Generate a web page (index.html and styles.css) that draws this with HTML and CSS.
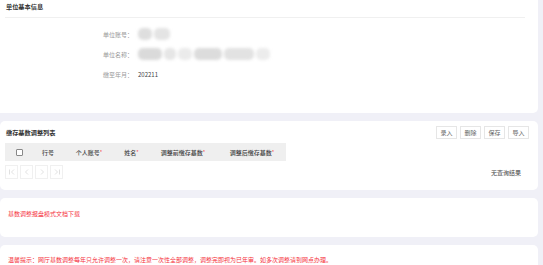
FILE: index.html
```html
<html>
  <head>
    <title>缴存基数调整</title>
    <link rel="stylesheet" href="styles.css">
  </head>
  <body>
    <main class="page">
      <section class="card info">
        <div class="card-head">
          <h2 class="card-title">单位基本信息</h2>
        </div>
        <div class="form">
          <div class="form-row">
            <span class="form-label">单位账号：</span>
            <span class="masked">
              <i></i><i></i>
            </span>
          </div>
          <div class="form-row">
            <span class="form-label">单位名称：</span>
            <span class="masked masked-long">
              <i></i><i></i><i></i><i></i><i></i><i></i>
            </span>
          </div>
          <div class="form-row">
            <span class="form-label">缴至年月：</span>
            <span class="form-value">202211</span>
          </div>
        </div>
      </section>

      <section class="card list">
        <div class="list-head">
          <h2 class="card-title">缴存基数调整列表</h2>
          <div class="actions">
            <button class="btn">录入</button>
            <button class="btn">删除</button>
            <button class="btn">保存</button>
            <button class="btn">导入</button>
          </div>
        </div>
        <div class="table-head">
          <span class="cell"><span class="check"></span></span>
          <span class="cell">行号</span>
          <span class="cell">个人账号<em>*</em></span>
          <span class="cell">姓名<em>*</em></span>
          <span class="cell">调整前缴存基数<em>*</em></span>
          <span class="cell">调整后缴存基数<em>*</em></span>
        </div>
        <div class="list-foot">
          <div class="pager">
            <span class="page-btn">
              <svg width="8" height="8" viewBox="0 0 8 8"><path d="M1.5 1.5v5M6 1.5L3.5 4 6 6.5" fill="none" stroke="#d8d8d8" stroke-width="0.8"/></svg>
            </span>
            <span class="page-btn">
              <svg width="8" height="8" viewBox="0 0 8 8"><path d="M5 1.5L2.5 4 5 6.5" fill="none" stroke="#d8d8d8" stroke-width="0.8"/></svg>
            </span>
            <span class="page-btn">
              <svg width="8" height="8" viewBox="0 0 8 8"><path d="M3 1.5L5.5 4 3 6.5" fill="none" stroke="#d8d8d8" stroke-width="0.8"/></svg>
            </span>
            <span class="page-btn">
              <svg width="8" height="8" viewBox="0 0 8 8"><path d="M2 1.5L4.5 4 2 6.5M6.5 1.5v5" fill="none" stroke="#d8d8d8" stroke-width="0.8"/></svg>
            </span>
          </div>
          <span class="empty">无查询结果</span>
        </div>
      </section>

      <section class="card download">
        <a class="red-text">基数调整报盘模式文档下载</a>
      </section>

      <section class="card tip">
        <p class="red-text">温馨提示：网厅基数调整每年只允许调整一次，请注意一次性全部调整，调整完即视为已年审。如多次调整请到网点办理。</p>
      </section>
    </main>
  </body>
</html>
```

FILE: styles.css
```css
:root {
  --fonts: "Noto Sans CJK SC", "Noto Sans", sans-serif;
  --background: #f0f0f7;
  --card-background: #ffffff;
  --card-radius: 5px;
  --title-text: #333333;
  --label-text: #9a9a9a;
  --red: #f5313d;
  --line: #f0f0f0;
}

body,
html {
  font-family: var(--fonts);
  margin: 0;
  padding: 0;
}

body {
  background: var(--background);
  color: var(--title-text);
  font-size: 6px;
  overflow: hidden;
  height: 265px;
}

.page {
  display: flex;
  flex-direction: column;
  gap: 8px;
  width: 538px;
}

.card {
  background: var(--card-background);
  border-radius: var(--card-radius);
  padding: 0 5px;
}

.info {
  height: 113px;
  border-radius: 0 0 var(--card-radius) 0;
  box-sizing: border-box;
}

.card-head {
  height: 17px;
  border-bottom: 1px solid var(--line);
  margin-right: 8px;
  display: flex;
  align-items: center;
}

.card-title {
  margin: 0;
  font-size: 6.2px;
  font-weight: 700;
  line-height: 8px;
  color: var(--title-text);
  padding-left: 1px;
}

.info .card-title {
  margin-top: -3px;
}

.form {
  padding-top: 6px;
}

.form-row {
  display: flex;
  align-items: center;
  height: 20px;
  gap: 5px;
}

.form-label {
  width: 128px;
  text-align: right;
  color: var(--label-text);
}

.form-value {
  color: #444444;
}

.masked {
  display: flex;
  gap: 2px;
  height: 12px;
  filter: blur(1.8px);
}

.masked i {
  display: block;
  height: 12px;
  background: #e2e2e2;
  border-radius: 5px;
}

.masked i:nth-child(1) { width: 14px; background: #dedede; }
.masked i:nth-child(2) { width: 16px; background: #e4e4e4; }

.masked-long i:nth-child(1) { width: 24px; background: #dadada; }
.masked-long i:nth-child(2) { width: 12px; background: #e6e6e6; }
.masked-long i:nth-child(3) { width: 14px; background: #ebebeb; }
.masked-long i:nth-child(4) { width: 28px; background: #dcdcdc; }
.masked-long i:nth-child(5) { width: 30px; background: #e2e2e2; }
.masked-long i:nth-child(6) { width: 14px; background: #ececec; }

.list {
  padding-top: 5px;
  padding-bottom: 12px;
}

.list-head {
  display: flex;
  justify-content: space-between;
  align-items: center;
  height: 13px;
  padding-right: 4px;
}

.actions {
  display: flex;
  gap: 3px;
}

.btn {
  font-family: var(--fonts);
  font-size: 6px;
  color: #666666;
  background: #ffffff;
  border: 1px solid #e6e6e6;
  border-radius: 0;
  height: 13px;
  width: 21px;
  padding: 0;
  line-height: 11px;
}

.table-head {
  display: grid;
  grid-template-columns: 28px 30px 52px 33px 70px 68px;
  width: 281px;
  height: 18px;
  margin-top: 4px;
  background: #efefef;
  font-weight: 500;
  color: #444444;
}

.cell {
  display: flex;
  align-items: center;
  justify-content: center;
}

.cell em {
  font-style: normal;
  color: var(--red);
  font-size: 5px;
  align-self: flex-start;
  margin-top: 5px;
}

.check {
  width: 5px;
  height: 5px;
  border: 1px solid #888888;
  border-radius: 1px;
  background: #ffffff;
}

.list-foot {
  display: flex;
  justify-content: space-between;
  align-items: center;
  margin-top: 4px;
  height: 13px;
  padding-right: 12px;
}

.pager {
  display: flex;
  gap: 2px;
}

.page-btn {
  display: flex;
  align-items: center;
  justify-content: center;
  width: 11px;
  height: 12px;
  border: 1px solid #f0f0f0;
}

.empty {
  color: #444444;
  margin-top: 1px;
}

.download {
  height: 39px;
  padding: 0 8px;
  display: flex;
  align-items: center;
}

.red-text {
  color: var(--red);
  margin: 0;
}

.download .red-text {
  margin-top: -8px;
}

.tip {
  height: 21px;
  padding: 11px 8px 0;
  box-sizing: border-box;
  border-radius: var(--card-radius) var(--card-radius) 0 0;
}

.tip .red-text {
  line-height: 8px;
}
```
